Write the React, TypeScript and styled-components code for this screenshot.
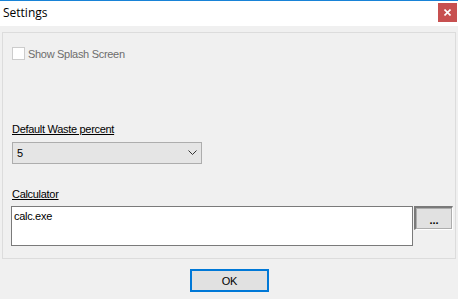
import React from "react";
import styled, { createGlobalStyle } from "styled-components";

const Global = createGlobalStyle`
  html, body { margin: 0; padding: 0; background: #f0f0f0; }
  * { box-sizing: border-box; }
`;

const Window = styled.div`
  width: 458px;
  height: 299px;
  background: #f0f0f0;
  border-top: 1px solid #1883d7;
  display: flex;
  flex-direction: column;
  font-family: "Liberation Sans", Arial, sans-serif;
  font-size: 11px;
  letter-spacing: -0.3px;
  color: #000;
  overflow: hidden;
`;

const TitleBar = styled.div`
  height: 25px;
  background: #fff;
  display: flex;
  justify-content: space-between;
  align-items: flex-start;
  padding-left: 3px;
  padding-right: 1px;
`;

const Title = styled.div`
  font-family: "Open Sans", "Noto Sans", sans-serif;
  font-size: 12px;
  letter-spacing: 0;
  line-height: 24px;
  color: #000;
`;

const CloseButton = styled.div`
  width: 19px;
  height: 19px;
  margin-top: 2px;
  background: #c75050;
  display: flex;
  align-items: center;
  justify-content: center;
`;

const Body = styled.div`
  flex: 1;
  display: flex;
  flex-direction: column;
  padding: 6px 2px 0 2px;
`;

const Group = styled.div`
  height: 227px;
  border: 1px solid #dcdcdc;
  display: flex;
  flex-direction: column;
  padding: 14px 0 0 9px;
`;

const CheckRow = styled.label`
  display: flex;
  align-items: center;
  gap: 3px;
  color: #6d6d6d;
  height: 13px;
`;

const CheckBox = styled.span`
  width: 13px;
  height: 13px;
  border: 1px solid #cccccc;
  background: #fff;
`;

const FieldLabel = styled.div<{ $top: number }>`
  margin-top: ${(p) => p.$top}px;
  text-decoration: underline;
  text-underline-offset: 1px;
  line-height: 13px;
  height: 13px;
`;

const Combo = styled.div`
  margin-top: 6px;
  width: 190px;
  height: 22px;
  border: 1px solid #adadad;
  background: #e5e5e5;
  display: flex;
  align-items: center;
  justify-content: space-between;
  padding: 0 4px 0 4px;
`;

const Row = styled.div`
  margin-top: 5px;
  margin-left: -1px;
  display: flex;
  align-items: flex-start;
  gap: 1px;
`;

const TextBox = styled.div`
  width: 402px;
  height: 40px;
  border: 1px solid #7a7a7a;
  background: #fff;
  padding: 3px 2px;
  line-height: 13px;
`;

const BrowseButton = styled.div`
  width: 39px;
  height: 24px;
  border-top: 2px solid #7a7a7a;
  border-left: 2px solid #7a7a7a;
  border-right: 1px solid #fff;
  border-bottom: 1px solid #fff;
  background: #f0f0f0;
  display: flex;
`;

const BrowseInner = styled.div`
  flex: 1;
  border: 1px solid #adadad;
  background: #e1e1e1;
  display: flex;
  align-items: center;
  justify-content: center;
  padding-top: 2px;
  font-size: 11px;
  font-weight: bold;
  letter-spacing: 0;
`;

const Footer = styled.div`
  display: flex;
  justify-content: center;
  padding-top: 10px;
  padding-left: 1px;
`;

const OkButton = styled.div`
  width: 79px;
  height: 23px;
  border: 2px solid #0078d7;
  background: #e1e1e1;
  display: flex;
  align-items: center;
  justify-content: center;
`;

export default function App() {
  return (
    <>
      <Global />
      <Window>
        <TitleBar>
          <Title>Settings</Title>
          <CloseButton>
            <svg width="7" height="7" viewBox="0 0 7 7">
              <path d="M0.5 0.5 L6.5 6.5 M6.5 0.5 L0.5 6.5" stroke="#fff" strokeWidth="1.6" />
            </svg>
          </CloseButton>
        </TitleBar>
        <Body>
          <Group>
            <CheckRow>
              <CheckBox />
              <span>Show Splash Screen</span>
            </CheckRow>
            <FieldLabel $top={63}>Default Waste percent</FieldLabel>
            <Combo>
              <span>5</span>
              <svg width="9" height="6" viewBox="0 0 9 6">
                <polyline points="0.5,0.5 4.5,4.5 8.5,0.5" fill="none" stroke="#333" strokeWidth="1" />
              </svg>
            </Combo>
            <FieldLabel $top={24}>Calculator</FieldLabel>
            <Row>
              <TextBox>calc.exe</TextBox>
              <BrowseButton>
                <BrowseInner>...</BrowseInner>
              </BrowseButton>
            </Row>
          </Group>
          <Footer>
            <OkButton>OK</OkButton>
          </Footer>
        </Body>
      </Window>
    </>
  );
}
